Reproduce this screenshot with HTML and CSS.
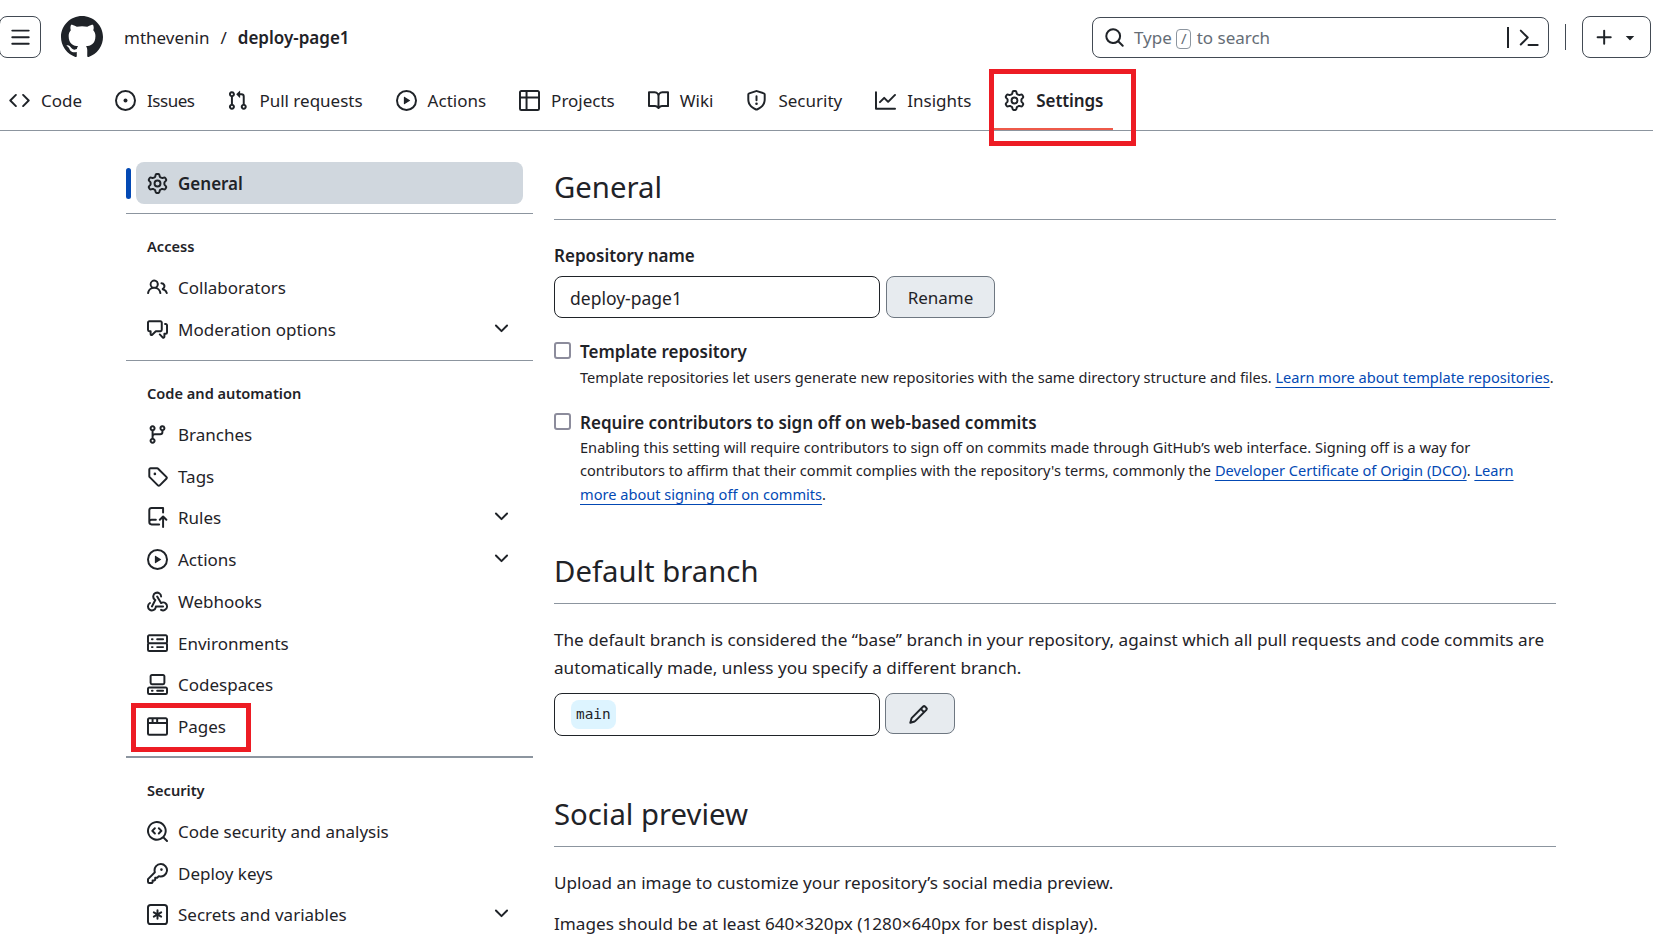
FILE: index.html
```html
<!DOCTYPE html>
<html lang="en">
<head>
    <meta charset="UTF-8">
    <meta name="viewport" content="width=device-width, initial-scale=1.0">
    <title>Settings - deploy-page1</title>
    <link rel="stylesheet" href="styles.css">
</head>
<body>
    <svg class="sprite" width="0" height="0">
        <symbol id="i-bars" viewBox="0 0 16 16"><path d="M1 2.75A.75.75 0 0 1 1.75 2h12.5a.75.75 0 0 1 0 1.5H1.75A.75.75 0 0 1 1 2.75Zm0 5A.75.75 0 0 1 1.75 7h12.5a.75.75 0 0 1 0 1.5H1.75A.75.75 0 0 1 1 7.75ZM1.75 12h12.5a.75.75 0 0 1 0 1.5H1.75a.75.75 0 0 1 0-1.5Z"/></symbol>
        <symbol id="i-github" viewBox="0 0 16 16"><path d="M8 0c4.42 0 8 3.58 8 8a8.013 8.013 0 0 1-5.45 7.59c-.4.08-.55-.17-.55-.38 0-.27.01-1.13.01-2.2 0-.75-.25-1.23-.54-1.48 1.78-.2 3.65-.88 3.65-3.95 0-.88-.31-1.59-.82-2.15.08-.2.36-1.02-.08-2.12 0 0-.67-.22-2.2.82-.64-.18-1.32-.27-2-.27-.68 0-1.36.09-2 .27-1.53-1.03-2.2-.82-2.2-.82-.44 1.1-.16 1.92-.08 2.12-.51.56-.82 1.28-.82 2.15 0 3.06 1.86 3.75 3.64 3.95-.23.2-.44.55-.51 1.07-.46.21-1.61.55-2.33-.66-.15-.24-.6-.83-1.23-.82-.67.01-.27.38.01.53.34.19.73.9.82 1.13.16.45.68 1.31 2.69.94 0 .67.01 1.3.01 1.49 0 .21-.15.45-.55.38A7.995 7.995 0 0 1 0 8c0-4.42 3.58-8 8-8Z"/></symbol>
        <symbol id="i-search" viewBox="0 0 16 16"><path d="M10.68 11.74a6 6 0 0 1-7.922-8.982 6 6 0 0 1 8.982 7.922l3.04 3.04a.749.749 0 0 1-.326 1.275.749.749 0 0 1-.734-.215ZM11.5 7a4.499 4.499 0 1 0-8.997 0A4.499 4.499 0 0 0 11.5 7Z"/></symbol>
        <symbol id="i-prompt" viewBox="0 0 16 16"><path d="m6.354 8.04-4.773 4.773a.75.75 0 1 0 1.061 1.06L7.945 8.57a.75.75 0 0 0 0-1.06L2.642 2.206a.75.75 0 0 0-1.06 1.061L6.353 8.04ZM8 14.5h7a.75.75 0 0 0 0-1.5H8a.75.75 0 0 0 0 1.5Z"/></symbol>
        <symbol id="i-plus" viewBox="0 0 16 16"><path d="M7.75 2a.75.75 0 0 1 .75.75V7h4.25a.75.75 0 0 1 0 1.5H8.5v4.25a.75.75 0 0 1-1.5 0V8.5H2.75a.75.75 0 0 1 0-1.5H7V2.75A.75.75 0 0 1 7.75 2Z"/></symbol>
        <symbol id="i-triangle" viewBox="0 0 16 16"><path d="m4.427 7.427 3.396 3.396a.25.25 0 0 0 .354 0l3.396-3.396A.25.25 0 0 0 11.396 7H4.604a.25.25 0 0 0-.177.427Z"/></symbol>
        <symbol id="i-code" viewBox="0 0 16 16"><path d="m11.28 3.22 4.25 4.25a.75.75 0 0 1 0 1.06l-4.25 4.25a.749.749 0 0 1-1.275-.326.749.749 0 0 1 .215-.734L13.94 8l-3.72-3.72a.749.749 0 0 1 .326-1.275.749.749 0 0 1 .734.215Zm-6.56 0a.751.751 0 0 1 1.042.018.751.751 0 0 1 .018 1.042L2.06 8l3.72 3.72a.749.749 0 0 1-.326 1.275.749.749 0 0 1-.734-.215L.47 8.53a.75.75 0 0 1 0-1.06Z"/></symbol>
        <symbol id="i-issue" viewBox="0 0 16 16"><path d="M8 9.5a1.5 1.5 0 1 0 0-3 1.5 1.5 0 0 0 0 3Z"/><path d="M8 0a8 8 0 1 1 0 16A8 8 0 0 1 8 0ZM1.5 8a6.5 6.5 0 1 0 13 0 6.5 6.5 0 0 0-13 0Z"/></symbol>
        <symbol id="i-pull" viewBox="0 0 16 16"><path d="M1.5 3.25a2.25 2.25 0 1 1 3 2.122v5.256a2.251 2.251 0 1 1-1.5 0V5.372A2.25 2.25 0 0 1 1.5 3.25Zm5.677-.177L9.573.677A.25.25 0 0 1 10 .854V2.5h1A2.5 2.5 0 0 1 13.5 5v5.628a2.251 2.251 0 1 1-1.5 0V5a1 1 0 0 0-1-1h-1v1.646a.25.25 0 0 1-.427.177L7.177 3.427a.25.25 0 0 1 0-.354ZM3.75 2.5a.75.75 0 1 0 0 1.5.75.75 0 0 0 0-1.5Zm0 9.5a.75.75 0 1 0 0 1.5.75.75 0 0 0 0-1.5Zm8.25.75a.75.75 0 1 0 1.5 0 .75.75 0 0 0-1.5 0Z"/></symbol>
        <symbol id="i-play" viewBox="0 0 16 16"><path d="M8 0a8 8 0 1 1 0 16A8 8 0 0 1 8 0ZM1.5 8a6.5 6.5 0 1 0 13 0 6.5 6.5 0 0 0-13 0Zm4.879-2.773 4.264 2.559a.25.25 0 0 1 0 .428l-4.264 2.559A.25.25 0 0 1 6 10.559V5.442a.25.25 0 0 1 .379-.215Z"/></symbol>
        <symbol id="i-table" viewBox="0 0 16 16"><path d="M0 1.75C0 .784.784 0 1.75 0h12.5C15.216 0 16 .784 16 1.75v12.5A1.75 1.75 0 0 1 14.25 16H1.75A1.75 1.75 0 0 1 0 14.25ZM6.5 6.5v8h7.75a.25.25 0 0 0 .25-.25V6.5Zm8-1.5V1.75a.25.25 0 0 0-.25-.25H6.5V5Zm-13 1.5v7.75c0 .138.112.25.25.25H5v-8ZM5 5V1.5H1.75a.25.25 0 0 0-.25.25V5Z"/></symbol>
        <symbol id="i-book" viewBox="0 0 16 16"><path d="M0 1.75A.75.75 0 0 1 .75 1h4.253c1.227 0 2.317.59 3 1.501A3.743 3.743 0 0 1 11.006 1h4.245a.75.75 0 0 1 .75.75v10.5a.75.75 0 0 1-.75.75h-4.507a2.25 2.25 0 0 0-1.591.659l-.622.621a.75.75 0 0 1-1.06 0l-.622-.621A2.25 2.25 0 0 0 5.258 13H.75a.75.75 0 0 1-.75-.75Zm7.251 10.324.004-5.073-.002-2.253A2.25 2.25 0 0 0 5.003 2.5H1.5v9h3.757a3.75 3.75 0 0 1 1.994.574ZM8.755 4.75l-.004 7.322a3.752 3.752 0 0 1 1.992-.572H14.5v-9h-3.495a2.25 2.25 0 0 0-2.25 2.25Z"/></symbol>
        <symbol id="i-shield" viewBox="0 0 16 16"><path d="M7.467.133a1.748 1.748 0 0 1 1.066 0l5.25 1.68A1.75 1.75 0 0 1 15 3.48V7c0 1.566-.32 3.182-1.303 4.682-.983 1.498-2.585 2.813-5.032 3.855a1.697 1.697 0 0 1-1.33 0c-2.447-1.042-4.049-2.357-5.032-3.855C1.32 10.182 1 8.566 1 7V3.48a1.75 1.75 0 0 1 1.217-1.667Zm.61 1.429a.25.25 0 0 0-.153 0l-5.25 1.68a.25.25 0 0 0-.174.238V7c0 1.358.275 2.666 1.057 3.86.784 1.194 2.121 2.34 4.366 3.297a.196.196 0 0 0 .154 0c2.245-.956 3.582-2.104 4.366-3.298C13.225 9.666 13.5 8.36 13.5 7V3.48a.251.251 0 0 0-.174-.237l-5.25-1.68ZM8.75 4.75v3a.75.75 0 0 1-1.5 0v-3a.75.75 0 0 1 1.5 0ZM9 10.5a1 1 0 1 1-2 0 1 1 0 0 1 2 0Z"/></symbol>
        <symbol id="i-graph" viewBox="0 0 16 16"><path d="M1.5 1.75V13.5h13.75a.75.75 0 0 1 0 1.5H.75a.75.75 0 0 1-.75-.75V1.75a.75.75 0 0 1 1.5 0Zm14.28 2.53-5.25 5.25a.75.75 0 0 1-1.06 0L7 7.06 4.28 9.78a.751.751 0 0 1-1.042-.018.751.751 0 0 1-.018-1.042l3.25-3.25a.75.75 0 0 1 1.06 0L10 7.94l4.72-4.72a.751.751 0 0 1 1.042.018.751.751 0 0 1 .018 1.042Z"/></symbol>
        <symbol id="i-gear" viewBox="0 0 16 16"><path d="M8 0a8.2 8.2 0 0 1 .701.031C9.444.095 9.99.645 10.16 1.29l.288 1.107c.018.066.079.158.212.224.231.114.454.243.668.386.123.082.233.09.299.071l1.103-.303c.644-.176 1.392.021 1.82.63.27.385.506.792.704 1.218.315.675.111 1.422-.364 1.891l-.814.806c-.049.048-.098.147-.088.294.016.257.016.515 0 .772-.01.147.038.246.088.294l.814.806c.475.469.679 1.216.364 1.891a7.977 7.977 0 0 1-.704 1.217c-.428.61-1.176.807-1.82.63l-1.102-.302c-.067-.019-.177-.011-.3.071a5.909 5.909 0 0 1-.668.386c-.133.066-.194.158-.211.224l-.29 1.106c-.168.646-.715 1.196-1.458 1.26a8.006 8.006 0 0 1-1.402 0c-.743-.064-1.289-.614-1.458-1.26l-.289-1.106c-.018-.066-.079-.158-.212-.224a5.738 5.738 0 0 1-.668-.386c-.123-.082-.233-.09-.299-.071l-1.103.303c-.644.176-1.392-.021-1.82-.63a8.12 8.12 0 0 1-.704-1.218c-.315-.675-.111-1.422.363-1.891l.815-.806c.05-.048.098-.147.088-.294a6.214 6.214 0 0 1 0-.772c.01-.147-.038-.246-.088-.294l-.815-.806C.635 6.045.431 5.298.746 4.623a7.92 7.92 0 0 1 .704-1.217c.428-.61 1.176-.807 1.82-.63l1.102.302c.067.019.177.011.3-.071.214-.143.437-.272.668-.386.133-.066.194-.158.211-.224l.29-1.106C6.009.645 6.556.095 7.299.03 7.53.01 7.764 0 8 0Zm-.571 1.525c-.036.003-.108.036-.137.146l-.289 1.105c-.147.561-.549.967-.998 1.189-.173.086-.34.183-.5.29-.417.278-.97.423-1.529.27l-1.103-.303c-.109-.03-.175.016-.195.045-.22.312-.412.644-.573.99-.014.031-.021.11.059.19l.815.806c.411.406.562.957.53 1.456a4.709 4.709 0 0 0 0 .582c.032.499-.119 1.05-.53 1.456l-.815.806c-.081.08-.073.159-.059.19.162.346.353.677.573.989.02.03.085.076.195.046l1.102-.303c.56-.153 1.113-.008 1.53.27.161.107.328.204.501.29.447.222.85.629.997 1.189l.289 1.105c.029.109.101.143.137.146a6.6 6.6 0 0 0 1.142 0c.036-.003.108-.036.137-.146l.289-1.105c.147-.561.549-.967.998-1.189.173-.086.34-.183.5-.29.417-.278.97-.423 1.529-.27l1.103.303c.109.029.175-.016.195-.045.22-.313.411-.644.573-.99.014-.031.021-.11-.059-.19l-.815-.806c-.411-.406-.562-.957-.53-1.456a4.709 4.709 0 0 0 0-.582c-.032-.499.119-1.05.53-1.456l.815-.806c.081-.08.073-.159.059-.19a6.464 6.464 0 0 0-.573-.989c-.02-.03-.085-.076-.195-.046l-1.102.303c-.56.153-1.113.008-1.53-.27a4.44 4.44 0 0 0-.501-.29c-.447-.222-.85-.629-.997-1.189l-.289-1.105c-.029-.11-.101-.143-.137-.146a6.6 6.6 0 0 0-1.142 0ZM11 8a3 3 0 1 1-6 0 3 3 0 0 1 6 0ZM9.5 8a1.5 1.5 0 1 0-3.001.001A1.5 1.5 0 0 0 9.5 8Z"/></symbol>
        <symbol id="i-people" viewBox="0 0 16 16"><path d="M2 5.5a3.5 3.5 0 1 1 5.898 2.549 5.508 5.508 0 0 1 3.034 4.084.75.75 0 1 1-1.482.235 4 4 0 0 0-7.9 0 .75.75 0 0 1-1.482-.236A5.507 5.507 0 0 1 3.102 8.05 3.493 3.493 0 0 1 2 5.5ZM11 4a3.001 3.001 0 0 1 2.22 5.018 5.01 5.01 0 0 1 2.56 3.012.749.749 0 0 1-.885.954.752.752 0 0 1-.549-.514 3.507 3.507 0 0 0-2.522-2.372.75.75 0 0 1-.574-.73v-.352a.75.75 0 0 1 .416-.672A1.5 1.5 0 0 0 11 5.5.75.75 0 0 1 11 4Zm-5.5-.5a2 2 0 1 0-.001 3.999A2 2 0 0 0 5.5 3.5Z"/></symbol>
        <symbol id="i-discussion" viewBox="0 0 16 16"><path d="M1.75 1h8.5c.966 0 1.75.784 1.75 1.75v5.5A1.75 1.75 0 0 1 10.25 10H7.061l-2.574 2.573A1.458 1.458 0 0 1 2 11.543V10h-.25A1.75 1.75 0 0 1 0 8.25v-5.5C0 1.784.784 1 1.75 1ZM1.5 2.75v5.5c0 .138.112.25.25.25h1a.75.75 0 0 1 .75.75v2.19l2.72-2.72a.749.749 0 0 1 .53-.22h3.5a.25.25 0 0 0 .25-.25v-5.5a.25.25 0 0 0-.25-.25h-8.5a.25.25 0 0 0-.25.25Zm13 2a.25.25 0 0 0-.25-.25h-.5a.75.75 0 0 1 0-1.5h.5c.966 0 1.75.784 1.75 1.75v5.5A1.75 1.75 0 0 1 14.25 12H14v1.543a1.458 1.458 0 0 1-2.487 1.03L9.22 12.28a.749.749 0 0 1 .326-1.275.749.749 0 0 1 .734.215l2.22 2.22v-2.19a.75.75 0 0 1 .75-.75h1a.25.25 0 0 0 .25-.25Z"/></symbol>
        <symbol id="i-branch" viewBox="0 0 16 16"><path d="M9.5 3.25a2.25 2.25 0 1 1 3 2.122V6A2.5 2.5 0 0 1 10 8.5H6a1 1 0 0 0-1 1v1.128a2.251 2.251 0 1 1-1.5 0V5.372a2.25 2.25 0 1 1 1.5 0v1.836A2.493 2.493 0 0 1 6 7h4a1 1 0 0 0 1-1v-.628A2.25 2.25 0 0 1 9.5 3.25Zm-6 0a.75.75 0 1 0 1.5 0 .75.75 0 0 0-1.5 0Zm8.25-.75a.75.75 0 1 0 0 1.5.75.75 0 0 0 0-1.5ZM4.25 12a.75.75 0 1 0 0 1.5.75.75 0 0 0 0-1.5Z"/></symbol>
        <symbol id="i-tag" viewBox="0 0 16 16"><path d="M1 7.775V2.75C1 1.784 1.784 1 2.75 1h5.025c.464 0 .91.184 1.238.513l6.25 6.25a1.75 1.75 0 0 1 0 2.474l-5.026 5.026a1.75 1.75 0 0 1-2.474 0l-6.25-6.25A1.752 1.752 0 0 1 1 7.775Zm1.5 0c0 .066.026.13.073.177l6.25 6.25a.25.25 0 0 0 .354 0l5.025-5.025a.25.25 0 0 0 0-.354l-6.25-6.25a.25.25 0 0 0-.177-.073H2.75a.25.25 0 0 0-.25.25ZM6 5a1 1 0 1 1 0 2 1 1 0 0 1 0-2Z"/></symbol>
        <symbol id="i-rules" viewBox="0 0 16 16"><path d="M1 2.5A2.5 2.5 0 0 1 3.5 0h8.75a.75.75 0 0 1 .75.75v3.5a.75.75 0 0 1-1.5 0V1.5h-8a1 1 0 0 0-1 1v6.708A2.493 2.493 0 0 1 3.5 9h3.25a.75.75 0 0 1 0 1.5H3.5a1 1 0 0 0 0 2h5.75a.75.75 0 0 1 0 1.5H3.5A2.5 2.5 0 0 1 1 11.5Zm13.23 7.79h-.001l-1.224-1.224v6.184a.75.75 0 0 1-1.5 0V9.066L10.28 10.29a.75.75 0 0 1-1.06-1.061l2.505-2.504a.75.75 0 0 1 1.06 0L15.29 9.23a.751.751 0 0 1-.018 1.042.751.751 0 0 1-1.042.018Z"/></symbol>
        <symbol id="i-webhook" viewBox="0 0 16 16"><path d="M5.5 4.25a2.25 2.25 0 0 1 4.5 0 .75.75 0 0 0 1.5 0 3.75 3.75 0 1 0-6.14 2.889l-2.272 4.258a.75.75 0 0 0 1.324.706L7 7.25a.75.75 0 0 0-.309-1.015A2.25 2.25 0 0 1 5.5 4.25Z"/><path d="M7.364 3.607a.75.75 0 0 1 1.03.257l2.608 4.349a3.75 3.75 0 1 1-.628 6.785.75.75 0 0 1 .752-1.299 2.25 2.25 0 1 0-.033-3.88.75.75 0 0 1-1.03-.256L7.107 4.636a.75.75 0 0 1 .257-1.03Z"/><path d="M2.9 8.776A.75.75 0 0 1 2.625 9.8 2.25 2.25 0 1 0 6 11.75a.75.75 0 0 1 .75-.751h5.5a.75.75 0 0 1 0 1.5H7.425a3.751 3.751 0 1 1-5.55-3.998.75.75 0 0 1 1.024.274Z"/></symbol>
        <symbol id="i-server" viewBox="0 0 16 16"><path d="M1.75 1h12.5c.966 0 1.75.784 1.75 1.75v4c0 .372-.116.717-.314 1 .198.283.314.628.314 1v4a1.75 1.75 0 0 1-1.75 1.75H1.75A1.75 1.75 0 0 1 0 12.75v-4c0-.358.109-.707.314-1a1.739 1.739 0 0 1-.314-1v-4C0 1.784.784 1 1.75 1ZM1.5 2.75v4c0 .138.112.25.25.25h12.5a.25.25 0 0 0 .25-.25v-4a.25.25 0 0 0-.25-.25H1.75a.25.25 0 0 0-.25.25Zm.25 5.75a.25.25 0 0 0-.25.25v4c0 .138.112.25.25.25h12.5a.25.25 0 0 0 .25-.25v-4a.25.25 0 0 0-.25-.25ZM7 4.75A.75.75 0 0 1 7.75 4h4.5a.75.75 0 0 1 0 1.5h-4.5A.75.75 0 0 1 7 4.75ZM7.75 10h4.5a.75.75 0 0 1 0 1.5h-4.5a.75.75 0 0 1 0-1.5ZM3 4.75A.75.75 0 0 1 3.75 4h.5a.75.75 0 0 1 0 1.5h-.5A.75.75 0 0 1 3 4.75ZM3.75 10h.5a.75.75 0 0 1 0 1.5h-.5a.75.75 0 0 1 0-1.5Z"/></symbol>
        <symbol id="i-codespaces" viewBox="0 0 16 16"><path d="M0 11.25c0-.966.784-1.75 1.75-1.75h12.5c.966 0 1.75.784 1.75 1.75v3A1.75 1.75 0 0 1 14.25 16H1.75A1.75 1.75 0 0 1 0 14.25Zm2-9.5C2 .784 2.784 0 3.75 0h8.5C13.216 0 14 .784 14 1.75v5a1.75 1.75 0 0 1-1.75 1.75h-8.5A1.75 1.75 0 0 1 2 6.75Zm1.75-.25a.25.25 0 0 0-.25.25v5c0 .138.112.25.25.25h8.5a.25.25 0 0 0 .25-.25v-5a.25.25 0 0 0-.25-.25Zm-2 9.5a.25.25 0 0 0-.25.25v3c0 .138.112.25.25.25h12.5a.25.25 0 0 0 .25-.25v-3a.25.25 0 0 0-.25-.25Z"/><path d="M7 12.75a.75.75 0 0 1 .75-.75h4.5a.75.75 0 0 1 0 1.5h-4.5a.75.75 0 0 1-.75-.75Zm-4 0a.75.75 0 0 1 .75-.75h.5a.75.75 0 0 1 0 1.5h-.5a.75.75 0 0 1-.75-.75Z"/></symbol>
        <symbol id="i-browser" viewBox="0 0 16 16"><path d="M0 2.75C0 1.784.784 1 1.75 1h12.5c.966 0 1.75.784 1.75 1.75v10.5A1.75 1.75 0 0 1 14.25 15H1.75A1.75 1.75 0 0 1 0 13.25ZM14.5 6h-13v7.25c0 .138.112.25.25.25h12.5a.25.25 0 0 0 .25-.25Zm-6-3.5v2h6V2.75a.25.25 0 0 0-.25-.25ZM5 2.5v2h2v-2Zm-3.25 0a.25.25 0 0 0-.25.25V4.5h2v-2Z"/></symbol>
        <symbol id="i-codescan" viewBox="0 0 16 16"><path d="M8.47 4.97a.75.75 0 0 0 0 1.06L9.94 7.5 8.47 8.97a.75.75 0 1 0 1.06 1.06l2-2a.75.75 0 0 0 0-1.06l-2-2a.75.75 0 0 0-1.06 0ZM6.53 6.03a.75.75 0 0 0-1.06-1.06l-2 2a.75.75 0 0 0 0 1.06l2 2a.75.75 0 1 0 1.06-1.06L5.06 7.5l1.47-1.47Z"/><path d="M12.246 13.307a7.501 7.501 0 1 1 1.06-1.06l2.474 2.473a.749.749 0 0 1-.326 1.275.749.749 0 0 1-.734-.215ZM1.5 7.5a6.002 6.002 0 0 0 3.608 5.504 6.002 6.002 0 0 0 6.486-1.117.748.748 0 0 1 .292-.293A6 6 0 1 0 1.5 7.5Z"/></symbol>
        <symbol id="i-key" viewBox="0 0 16 16"><path d="M10.5 0a5.499 5.499 0 1 1-1.288 10.848l-.932.932a.749.749 0 0 1-.53.22H7v.75a.749.749 0 0 1-.22.53l-.5.5a.749.749 0 0 1-.53.22H5v.75a.749.749 0 0 1-.22.53l-.5.5a.749.749 0 0 1-.53.22h-2A1.75 1.75 0 0 1 0 14.25v-2c0-.199.079-.389.22-.53l4.932-4.932A5.5 5.5 0 0 1 10.5 0Zm-4 5.5c-.001.431.069.86.205 1.269a.75.75 0 0 1-.181.768L1.5 12.56v1.69c0 .138.112.25.25.25h1.69l.06-.06v-1.19a.75.75 0 0 1 .75-.75h1.19l.06-.06v-1.19a.75.75 0 0 1 .75-.75h1.19l1.023-1.025a.75.75 0 0 1 .768-.18A4 4 0 1 0 6.5 5.5ZM11 6a1 1 0 1 1 0-2 1 1 0 0 1 0 2Z"/></symbol>
        <symbol id="i-asterisk" viewBox="0 0 16 16"><path d="M0 2.75A2.75 2.75 0 0 1 2.75 0h10.5A2.75 2.75 0 0 1 16 2.75v10.5A2.75 2.75 0 0 1 13.25 16H2.75A2.75 2.75 0 0 1 0 13.25ZM2.75 1.5c-.69 0-1.25.56-1.25 1.25v10.5c0 .69.56 1.25 1.25 1.25h10.5c.69 0 1.25-.56 1.25-1.25V2.75c0-.69-.56-1.25-1.25-1.25Z"/><path d="M8 4a.75.75 0 0 1 .75.75V6.7l1.69-.975a.75.75 0 0 1 .75 1.3L9.5 8l1.69.976a.75.75 0 0 1-.75 1.298L8.75 9.3v1.951a.75.75 0 0 1-1.5 0V9.299l-1.69.976a.75.75 0 0 1-.75-1.3L6.5 8l-1.69-.975a.75.75 0 0 1 .75-1.3l1.69.976V4.75A.75.75 0 0 1 8 4Z"/></symbol>
        <symbol id="i-chevron" viewBox="0 0 16 16"><path d="M12.78 5.22a.749.749 0 0 1 0 1.06l-4.25 4.25a.749.749 0 0 1-1.06 0L3.22 6.28a.749.749 0 1 1 1.06-1.06L8 8.939l3.72-3.719a.749.749 0 0 1 1.06 0Z"/></symbol>
        <symbol id="i-pencil" viewBox="0 0 16 16"><path d="M11.013 1.427a1.75 1.75 0 0 1 2.474 0l1.086 1.086a1.75 1.75 0 0 1 0 2.474l-8.61 8.61c-.21.21-.47.364-.756.445l-3.251.93a.75.75 0 0 1-.927-.928l.929-3.25c.081-.286.235-.547.445-.758l8.61-8.61Zm.176 4.823L9.75 4.81l-6.286 6.287a.253.253 0 0 0-.064.108l-.558 1.953 1.953-.558a.253.253 0 0 0 .108-.064Zm1.238-3.763a.25.25 0 0 0-.354 0L10.811 3.75l1.439 1.44 1.263-1.263a.25.25 0 0 0 0-.354Z"/></symbol>
    </svg>

    <header class="topbar">
        <button class="hamburger"><svg class="icon"><use href="#i-bars"/></svg></button>
        <svg class="logo"><use href="#i-github"/></svg>
        <div class="crumbs">
            <span>mthevenin</span>
            <span class="crumb-sep">/</span>
            <strong>deploy-page1</strong>
        </div>
        <div class="search">
            <svg class="icon"><use href="#i-search"/></svg>
            <span class="search-text">Type <kbd>/</kbd> to search</span>
            <span class="search-bar"></span>
            <svg class="icon prompt"><use href="#i-prompt"/></svg>
        </div>
        <span class="top-divider"></span>
        <button class="create">
            <svg class="icon"><use href="#i-plus"/></svg>
            <svg class="icon caret"><use href="#i-triangle"/></svg>
        </button>
    </header>

    <nav class="tabs">
        <a class="tab"><svg class="icon"><use href="#i-code"/></svg>Code</a>
        <a class="tab tight"><svg class="icon"><use href="#i-issue"/></svg>Issues</a>
        <a class="tab"><svg class="icon"><use href="#i-pull"/></svg>Pull requests</a>
        <a class="tab"><svg class="icon"><use href="#i-play"/></svg>Actions</a>
        <a class="tab"><svg class="icon"><use href="#i-table"/></svg>Projects</a>
        <a class="tab"><svg class="icon"><use href="#i-book"/></svg>Wiki</a>
        <a class="tab"><svg class="icon"><use href="#i-shield"/></svg>Security</a>
        <a class="tab"><svg class="icon"><use href="#i-graph"/></svg>Insights</a>
        <a class="tab active"><svg class="icon"><use href="#i-gear"/></svg>Settings</a>
    </nav>

    <div class="layout">
        <aside class="sidebar">
            <div class="side-current">
                <span class="side-mark"></span>
                <a class="side-item selected"><svg class="icon"><use href="#i-gear"/></svg>General</a>
            </div>
            <hr class="side-rule">
            <h3 class="side-head">Access</h3>
            <a class="side-item"><svg class="icon"><use href="#i-people"/></svg>Collaborators</a>
            <a class="side-item"><svg class="icon"><use href="#i-discussion"/></svg>Moderation options<svg class="icon chev"><use href="#i-chevron"/></svg></a>
            <hr class="side-rule">
            <h3 class="side-head">Code and automation</h3>
            <a class="side-item"><svg class="icon"><use href="#i-branch"/></svg>Branches</a>
            <a class="side-item"><svg class="icon"><use href="#i-tag"/></svg>Tags</a>
            <a class="side-item"><svg class="icon"><use href="#i-rules"/></svg>Rules<svg class="icon chev"><use href="#i-chevron"/></svg></a>
            <a class="side-item"><svg class="icon"><use href="#i-play"/></svg>Actions<svg class="icon chev"><use href="#i-chevron"/></svg></a>
            <a class="side-item"><svg class="icon"><use href="#i-webhook"/></svg>Webhooks</a>
            <a class="side-item"><svg class="icon"><use href="#i-server"/></svg>Environments</a>
            <a class="side-item"><svg class="icon"><use href="#i-codespaces"/></svg>Codespaces</a>
            <a class="side-item"><svg class="icon"><use href="#i-browser"/></svg>Pages</a>
            <hr class="side-rule thick">
            <h3 class="side-head">Security</h3>
            <a class="side-item"><svg class="icon"><use href="#i-codescan"/></svg>Code security and analysis</a>
            <a class="side-item"><svg class="icon"><use href="#i-key"/></svg>Deploy keys</a>
            <a class="side-item"><svg class="icon"><use href="#i-asterisk"/></svg>Secrets and variables<svg class="icon chev"><use href="#i-chevron"/></svg></a>
        </aside>

        <main class="content">
            <h2 class="section-title">General</h2>
            <label class="field-label">Repository name</label>
            <div class="field-row">
                <input class="text-input" type="text" value="deploy-page1">
                <button class="btn">Rename</button>
            </div>

            <div class="check">
                <input type="checkbox" class="check-box">
                <div>
                    <div class="check-title">Template repository</div>
                    <p class="check-note">Template repositories let users generate new repositories with the same directory structure and files. <a class="link">Learn more about template repositories</a>.</p>
                </div>
            </div>
            <div class="check">
                <input type="checkbox" class="check-box">
                <div>
                    <div class="check-title">Require contributors to sign off on web-based commits</div>
                    <p class="check-note">Enabling this setting will require contributors to sign off on commits made through GitHub’s web interface. Signing off is a way for<br>contributors to affirm that their commit complies with the repository's terms, commonly the <a class="link">Developer Certificate of Origin (DCO)</a>. <a class="link">Learn<br>more about signing off on commits</a>.</p>
                </div>
            </div>

            <h2 class="section-title second">Default branch</h2>
            <p class="body-text">The default branch is considered the “base” branch in your repository, against which all pull requests and code commits are<br>automatically made, unless you specify a different branch.</p>
            <div class="branch-row">
                <div class="branch-box"><code class="branch-pill">main</code></div>
                <button class="btn pencil"><svg class="icon"><use href="#i-pencil"/></svg></button>
            </div>

            <h2 class="section-title third">Social preview</h2>
            <p class="body-text">Upload an image to customize your repository’s social media preview.</p>
            <p class="body-text next">Images should be at least 640×320px (1280×640px for best display).</p>
        </main>
    </div>

    <!-- red annotation boxes drawn over the screenshot -->
    <div class="mark mark-settings"></div>
    <div class="mark mark-pages"></div>
</body>
</html>
```

FILE: styles.css
```css
* {
    box-sizing: border-box;
}

html, body {
    margin: 0;
    height: 942px;
    overflow: hidden;
}

body {
    position: relative;
    font-family: "Noto Sans", "Open Sans", sans-serif;
    font-size: 17px;
    color: #1f2328;
    background: #ffffff;
}

.sprite {
    display: block;
}

.icon {
    width: 21px;
    height: 21px;
    flex: none;
    fill: #1f2328;
}

/* top bar */
.topbar {
    display: flex;
    align-items: center;
    height: 42px;
    margin-top: 16px;
}

.hamburger {
    display: flex;
    align-items: center;
    justify-content: center;
    width: 42px;
    height: 42px;
    margin-left: -1px;
    padding: 0;
    background: #fff;
    border: 1px solid #424a53;
    border-radius: 8px;
}

.logo {
    width: 42px;
    height: 42px;
    margin-left: 20px;
    fill: #1f2328;
}

.crumbs {
    display: flex;
    align-items: center;
    gap: 11px;
    margin-left: 21px;
}

.crumbs strong {
    font-weight: 600;
}

.crumb-sep {
    color: #1f2328;
}

.search {
    display: flex;
    align-items: center;
    width: 457px;
    height: 41px;
    margin-left: auto;
    padding: 0 9px 0 11px;
    border: 1px solid #424a53;
    border-radius: 8px;
}

.search-text {
    margin-left: 9px;
    color: #656d76;
}

.search-text kbd {
    display: inline-block;
    width: 15px;
    height: 20px;
    margin-right: 1px;
    border: 1px solid #8c959f;
    border-radius: 4px;
    font-family: inherit;
    font-size: 15px;
    line-height: 17px;
    text-align: center;
}

.search-bar {
    width: 2px;
    height: 21px;
    margin-left: auto;
    background: #1f2328;
}

.prompt {
    margin-left: 9px;
}

.top-divider {
    width: 1px;
    height: 26px;
    margin: 0 16px;
    background: #424a53;
}

.create {
    display: flex;
    align-items: center;
    gap: 6px;
    width: 69px;
    height: 42px;
    margin-right: 2px;
    padding: 0 0 0 11px;
    background: #fff;
    border: 1px solid #424a53;
    border-radius: 8px;
}

.caret {
    width: 18px;
    height: 18px;
}

/* repo tabs */
.tabs {
    display: flex;
    gap: 33px;
    height: 73px;
    padding: 12px 0 0 9px;
    border-bottom: 1px solid #8c959f;
}

.tab {
    display: flex;
    align-items: center;
    gap: 11px;
    height: 60px;
}

.tab.tight {
    letter-spacing: -0.5px;
}

.tab.active {
    margin-left: -10px;
    padding: 0 10px;
    font-weight: 600;
    letter-spacing: -0.1px;
    box-shadow: inset 0 -2px 0 #ee5a4a;
}

/* layout */
.layout {
    display: flex;
    gap: 21px;
    padding: 31px 97px 0 126px;
}

/* sidebar */
.sidebar {
    width: 407px;
    flex: none;
}

.side-current {
    display: flex;
    align-items: center;
    gap: 5px;
}

.side-mark {
    width: 5px;
    height: 31px;
    background: #0349b4;
    border-radius: 3px;
}

.side-item {
    display: flex;
    align-items: center;
    gap: 10px;
    height: 41.75px;
    padding: 0 21px;
}

.side-item.selected {
    flex: 1;
    height: 42px;
    padding: 0 11px;
    margin-right: 10px;
    background: #d0d7de;
    border-radius: 8px;
    font-weight: 600;
}

.chev {
    margin-left: auto;
    margin-top: -2px;
}

.side-rule {
    height: 1px;
    margin: 9px 0 0;
    background: #8c959f;
    border: 0;
}

.side-rule.thick {
    height: 2px;
    margin-top: 8px;
}

.side-head {
    height: 53px;
    margin: 0;
    padding: 21px 0 0 21px;
    font-size: 14.6px;
    font-weight: 600;
    line-height: 22px;
}

/* main column */
.content {
    flex: 1;
    min-width: 0;
}

.section-title {
    height: 58px;
    margin: 0;
    border-bottom: 1px solid #8c959f;
    font-size: 29.3px;
    font-weight: 400;
    line-height: 50px;
}

.section-title.second {
    margin-top: 40px;
}

.section-title.third {
    margin-top: 53px;
    height: 58px;
}

.field-label {
    display: block;
    margin-top: 23px;
    font-weight: 600;
    line-height: 26px;
}

.field-row {
    display: flex;
    gap: 6px;
    margin-top: 7px;
}

.text-input {
    width: 326px;
    height: 42px;
    padding: 2px 15px 0;
    font: inherit;
    font-size: 17.5px;
    color: #1f2328;
    border: 1px solid #1f2328;
    border-radius: 8px;
}

.btn {
    width: 109px;
    height: 42px;
    padding: 1px 0 0;
    font: inherit;
    color: #1f2328;
    background: #e7ebef;
    border: 1px solid #6e7781;
    border-radius: 8px;
}

.check {
    display: flex;
    gap: 9px;
    margin-top: 22px;
}

.check + .check {
    margin-top: 21px;
}

.check + .check .check-note {
    margin-top: 1px;
}

.check-box {
    appearance: none;
    width: 17px;
    height: 17px;
    margin: 2px 0 0;
    border: 2px solid #8c8c9c;
    border-radius: 3px;
    background: #fff;
}

.check-title {
    font-weight: 600;
    line-height: 24px;
}

.check-note {
    margin: 2px 0 0;
    font-size: 14.6px;
    line-height: 23.5px;
    white-space: nowrap;
}

.link {
    color: #0349b4;
    text-decoration: underline;
    text-underline-offset: 4px;
}

.body-text {
    margin: 22px 0 0;
    font-size: 17.15px;
    line-height: 28px;
}

.body-text.next {
    margin-top: 13px;
}

.branch-row {
    display: flex;
    align-items: flex-start;
    gap: 5px;
    margin-top: 11px;
}

.branch-box {
    display: flex;
    align-items: center;
    width: 326px;
    height: 43px;
    padding: 0 16px;
    border: 1px solid #1f2328;
    border-radius: 8px;
}

.branch-pill {
    padding: 4px 5px;
    font-family: "DejaVu Sans Mono", "Liberation Mono", monospace;
    font-size: 14.4px;
    line-height: 21px;
    color: #1f2328;
    background: #ddf4ff;
    border-radius: 8px;
}

.btn.pencil {
    display: flex;
    align-items: center;
    justify-content: center;
    width: 70px;
    height: 41px;
    padding: 2px 4px 0 0;
}

/* annotations */
.mark {
    position: absolute;
    border: 5px solid #ed1c24;
}

.mark-settings {
    left: 989px;
    top: 69px;
    width: 147px;
    height: 77px;
}

.mark-pages {
    left: 131px;
    top: 703px;
    width: 120px;
    height: 49px;
}
```
